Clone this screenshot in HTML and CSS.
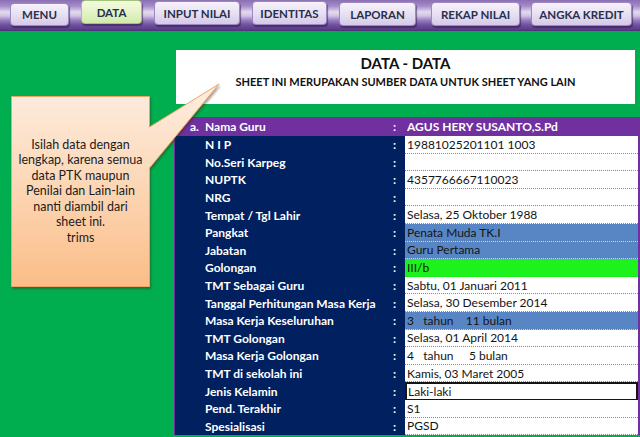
FILE: index.html
```html
<!DOCTYPE html>
<html lang="id">
<head>
<meta charset="utf-8">
<title>DATA - DATA</title>
<link rel="stylesheet" href="styles.css">
</head>
<body>
<nav class="menubar">
  <div class="btn btn-menu">MENU</div>
  <div class="btn btn-data">DATA</div>
  <div class="btn btn-input">INPUT NILAI</div>
  <div class="btn btn-ident">IDENTITAS</div>
  <div class="btn btn-lap">LAPORAN</div>
  <div class="btn btn-rekap">REKAP NILAI</div>
  <div class="btn btn-ak">ANGKA KREDIT</div>
</nav>
<main class="sheet">
  <section class="title-box">
    <h1>DATA - DATA</h1>
    <p>SHEET INI MERUPAKAN SUMBER DATA UNTUK SHEET YANG LAIN</p>
  </section>
  <section class="table">
    <div class="row head"><div class="label"><span class="num">a.</span>Nama Guru</div><div class="colon">:</div><div class="value">AGUS HERY SUSANTO,S.Pd</div></div>
    <div class="row"><div class="label">N I P</div><div class="colon">:</div><div class="value">19881025201101 1003</div></div>
    <div class="row"><div class="label">No.Seri Karpeg</div><div class="colon">:</div><div class="value"></div></div>
    <div class="row"><div class="label">NUPTK</div><div class="colon">:</div><div class="value">4357766667110023</div></div>
    <div class="row"><div class="label">NRG</div><div class="colon">:</div><div class="value"></div></div>
    <div class="row"><div class="label">Tempat / Tgl Lahir</div><div class="colon">:</div><div class="value">Selasa, 25 Oktober 1988</div></div>
    <div class="row"><div class="label">Pangkat</div><div class="colon">:</div><div class="value blue">Penata Muda TK.I</div></div>
    <div class="row"><div class="label">Jabatan</div><div class="colon">:</div><div class="value blue">Guru Pertama</div></div>
    <div class="row"><div class="label">Golongan</div><div class="colon">:</div><div class="value green">III/b</div></div>
    <div class="row"><div class="label">TMT Sebagai Guru</div><div class="colon">:</div><div class="value">Sabtu, 01 Januari 2011</div></div>
    <div class="row"><div class="label">Tanggal Perhitungan Masa Kerja</div><div class="colon">:</div><div class="value">Selasa, 30 Desember 2014</div></div>
    <div class="row"><div class="label">Masa Kerja Keseluruhan</div><div class="colon">:</div><div class="value blue pre">3   tahun    11 bulan</div></div>
    <div class="row"><div class="label">TMT Golongan</div><div class="colon">:</div><div class="value">Selasa, 01 April 2014</div></div>
    <div class="row"><div class="label">Masa Kerja Golongan</div><div class="colon">:</div><div class="value pre">4   tahun     5 bulan</div></div>
    <div class="row"><div class="label">TMT di sekolah ini</div><div class="colon">:</div><div class="value">Kamis, 03 Maret 2005</div></div>
    <div class="row"><div class="label">Jenis Kelamin</div><div class="colon">:</div><div class="value selected">Laki-laki</div></div>
    <div class="row"><div class="label">Pend. Terakhir</div><div class="colon">:</div><div class="value">S1</div></div>
    <div class="row"><div class="label">Spesialisasi</div><div class="colon">:</div><div class="value">PGSD</div></div>
  </section>
</main>
<aside class="callout">
  <svg class="callout-shape" width="230" height="215" viewBox="0 0 230 215">
    <defs>
      <linearGradient id="peach" x1="0" y1="4" x2="0" y2="206" gradientUnits="userSpaceOnUse">
        <stop offset="0" stop-color="#fdeee2"/>
        <stop offset="0.5" stop-color="#fcd7b6"/>
        <stop offset="1" stop-color="#fbbd88"/>
      </linearGradient>
    </defs>
    <path d="M11.5 16.5 H149.5 V47 L219 4 L149.5 88 V206.5 H11.5 Z" fill="url(#peach)" stroke="#eea366" stroke-width="1"/>
  </svg>
  <div class="callout-text">Isilah data dengan<br>lengkap, karena semua<br>data PTK maupun<br>Penilai dan Lain-lain<br>nanti diambil dari<br>sheet ini.<br>trims</div>
</aside>
</body>
</html>
```
FILE: styles.css
```css
* { box-sizing: border-box; }
html, body { margin: 0; padding: 0; }
body {
  width: 640px;
  height: 437px;
  overflow: hidden;
  background: #00ae4f;
  font-family: Lato, "Open Sans", sans-serif;
  position: relative;
}

.menubar {
  height: 31px;
  display: flex;
  align-items: flex-start;
  gap: 12px;
  padding-left: 10px;
  background: linear-gradient(to bottom, #8b6fb3 0px, #a48bca 6px, #e3daef 12px, #d0c2e5 16px, #9a80c2 20px, #6f509c 25px, #5d3e8b 29px, #4d3077 31px);
}
.btn {
  margin-top: 2px;
  height: 24px;
  display: flex;
  align-items: center;
  justify-content: center;
  font-weight: 700;
  font-size: 11.5px;
  color: #27304c;
  background: linear-gradient(to bottom, #f6f2fb, #e6def2 55%, #d5c9e8);
  border: 1px solid #9d88bf;
  border-radius: 4px;
  box-shadow: 1px 2px 1px rgba(45, 20, 80, 0.55);
}
.btn-menu { width: 59px; margin-top: 3px; height: 23px; }
.btn-data {
  width: 61px;
  margin-top: 0;
  background: linear-gradient(to bottom, #f4fbe2, #e3f3c4 55%, #d2eaa8);
  border-color: #a4c577;
}
.btn-input { width: 86px; margin-top: 1px; }
.btn-ident { width: 75px; margin-top: 1px; }
.btn-lap { width: 77px; }
.btn-rekap { width: 89px; margin-left: 3px; }
.btn-ak { width: 101px; margin-left: -1px; }

.sheet {
  padding-top: 19px;
}
.title-box {
  margin-left: 176px;
  width: 459px;
  height: 54px;
  background: #fff;
  display: flex;
  flex-direction: column;
  align-items: center;
  padding-top: 4px;
}
.title-box h1 {
  margin: 0;
  font-size: 15px;
  line-height: 18px;
  font-weight: 700;
  color: #111;
}
.title-box p {
  margin: 3px 0 0;
  font-size: 11px;
  line-height: 14px;
  font-weight: 700;
  color: #111;
}

.table {
  margin-top: 13px;
  margin-left: 174px;
  border-left: 1px solid #7030a0;
  border-right: 2px solid #7030a0;
  background: #002060;
}
.row {
  display: grid;
  grid-template-columns: 215px 15px 233px;
  height: 17.6px;
  align-items: stretch;
}
.row.head {
  height: 19px;
  background: #7030a0;
}
.label {
  padding-left: 30px;
  font-weight: 700;
  font-size: 12px;
  color: #fff;
  display: flex;
  align-items: center;
  white-space: nowrap;
}
.head .label { padding-left: 15px; }
.num { display: inline-block; width: 15px; }
.colon {
  padding-left: 3px;
  font-weight: 700;
  font-size: 12px;
  color: #fff;
  display: flex;
  align-items: center;
}
.value {
  padding-left: 2px;
  font-size: 12px;
  color: #141414;
  background: #fff;
  border-bottom: 1px dotted #8a8a8a;
  display: flex;
  align-items: center;
  white-space: nowrap;
}
.head .value {
  background: transparent;
  border: 0;
  color: #fff;
  font-weight: 700;
}
.value.pre { white-space: pre; }
.value.blue { background: #5886c4; border-bottom-color: #c9d6ea; }
.value.green { background: #1df21d; }
.value.selected {
  border: 2px solid #141414;
  padding-left: 1px;
}

.callout {
  position: absolute;
  left: 0;
  top: 80px;
  width: 230px;
  height: 215px;
}
.callout-shape {
  position: absolute;
  left: 0;
  top: 0;
  filter: drop-shadow(1px 2px 1px rgba(60, 40, 20, 0.45));
}
.callout-text {
  position: absolute;
  left: 11px;
  top: 16px;
  width: 139px;
  height: 190px;
  display: flex;
  align-items: center;
  justify-content: center;
  text-align: center;
  font-size: 12.5px;
  line-height: 15.5px;
  color: #1c1c1c;
}
```
